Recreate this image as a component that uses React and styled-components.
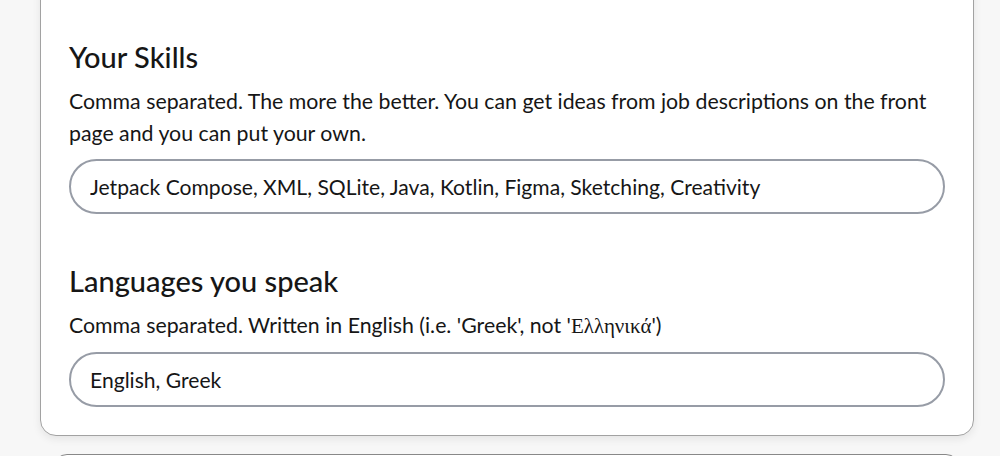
import React from 'react'
import styled, { createGlobalStyle } from 'styled-components'

const Global = createGlobalStyle`
  html, body {
    margin: 0;
    padding: 0;
    background: #f7f7f7;
    overflow: hidden;
  }
  body {
    font-family: Lato, "Noto Sans", sans-serif;
    color: #161616;
  }
`

const Page = styled.div`
  display: flex;
  flex-direction: column;
  align-items: flex-start;
  height: 456px;
  overflow: hidden;
`

const Card = styled.section`
  box-sizing: border-box;
  margin: -40px 0 0 40px;
  width: 934px;
  padding: 79px 28px 28px 28px;
  background: #fff;
  border: 1px solid #a2a2a2;
  border-radius: 16px;
  box-shadow: 0 3px 8px rgba(0, 0, 0, 0.08);
`

const NextCard = styled.div`
  box-sizing: border-box;
  margin: 18px 0 0 53px;
  width: 907px;
  height: 60px;
  flex-shrink: 0;
  background: #fff;
  border: 1px solid #888;
  border-radius: 14px;
`

const Field = styled.div`
  display: flex;
  flex-direction: column;
  & + & {
    margin-top: 50px;
  }
`

const Title = styled.h2`
  margin: 0;
  font-size: 29px;
  font-weight: 500;
  line-height: 34px;
`

const Hint = styled.p`
  margin: 11px 0 10px 0;
  font-size: 21.3px;
  line-height: 32px;
  font-weight: 400;
`

const Greek = styled.span`
  font-family: "Liberation Serif", serif;
  font-size: 21px;
`

const Input = styled.input`
  box-sizing: border-box;
  width: 876px;
  height: 55px;
  padding: 0 19px;
  border: 2px solid #979ca6;
  border-radius: 28px;
  background: #fff;
  font-family: Lato, "Noto Sans", sans-serif;
  font-size: 21.1px;
  color: #161616;
  outline: none;
`

export default function App() {
  return (
    <Page>
      <Global />
      <Card>
        <Field>
          <Title>Your Skills</Title>
          <Hint>
            Comma separated. The more the better. You can get ideas from job descriptions on the front
            page and you can put your own.
          </Hint>
          <Input
            readOnly
            value="Jetpack Compose, XML, SQLite, Java, Kotlin, Figma, Sketching, Creativity"
          />
        </Field>
        <Field>
          <Title>Languages you speak</Title>
          <Hint>
            Comma separated. Written in English (i.e. 'Greek', not '<Greek>Ελληνικά</Greek>')
          </Hint>
          <Input readOnly value="English, Greek" />
        </Field>
      </Card>
      <NextCard />
    </Page>
  )
}
